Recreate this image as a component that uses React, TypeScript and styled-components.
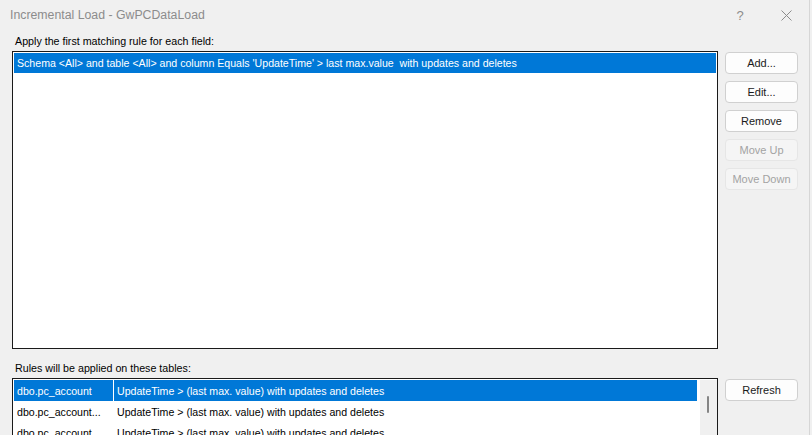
import styled, { createGlobalStyle } from 'styled-components';

const GlobalStyle = createGlobalStyle`
  html, body {
    margin: 0;
    padding: 0;
    background: #f0f0f0;
  }
  body {
    font-family: 'Liberation Sans', Arial, sans-serif;
  }
`;

// --- Window chrome ---
const Window = styled.div`
  width: 809px;
  height: 435px;
  background: #f0f0f0;
  border-right: 1px solid #d6d6d6;
  overflow: hidden;
  display: flex;
  flex-direction: column;
`;

const TitleBar = styled.div`
  height: 30px;
  display: flex;
  align-items: center;
  padding-left: 10px;
  color: #8c8c8c;
  font-family: 'Liberation Sans', Arial, sans-serif;
  font-size: 12.3px;
`;

const Title = styled.div`
  flex: 1;
`;

const TitleButton = styled.div`
  width: 46px;
  height: 30px;
  display: flex;
  align-items: center;
  justify-content: center;
  color: #8c8c8c;
  font-size: 13px;
`;

const Body = styled.div`
  flex: 1;
  padding: 0 0 0 12px;
  display: flex;
  flex-direction: column;
`;

const Label = styled.div<{ $height: number }>`
  height: ${(p) => p.$height}px;
  display: flex;
  align-items: flex-end;
  padding-left: 3px;
  padding-bottom: 4px;
  box-sizing: border-box;
  font-size: 10.7px;
  color: #000;
`;

const Section = styled.div`
  display: flex;
  gap: 7px;
  align-items: flex-start;
`;

// --- Lists ---
const ListBox = styled.div<{ $height: number }>`
  width: 706px;
  height: ${(p) => p.$height}px;
  box-sizing: border-box;
  border: 1px solid #1a1a1a;
  background: #fff;
  padding: 1px;
  position: relative;
  overflow: hidden;
`;

const RuleRow = styled.div<{ $selected?: boolean }>`
  height: 20px;
  display: flex;
  align-items: center;
  padding-left: 3px;
  font-size: 10.6px;
  white-space: pre;
  background: ${(p) => (p.$selected ? '#0078d7' : 'transparent')};
  color: ${(p) => (p.$selected ? '#fff' : '#000')};
`;

const TableRows = styled.div`
  margin-right: 18px;
`;

const TableRow = styled.div<{ $selected?: boolean }>`
  height: 21px;
  display: flex;
  font-size: 10.6px;
  background: ${(p) => (p.$selected ? '#0078d7' : 'transparent')};
  color: ${(p) => (p.$selected ? '#fff' : '#000')};
`;

const Cell = styled.div<{ $width?: number }>`
  ${(p) => (p.$width ? `width: ${p.$width}px;` : 'flex: 1;')}
  padding-left: 3px;
  display: flex;
  align-items: center;
  white-space: nowrap;
  overflow: hidden;
  border-right: 1px solid #fff;
`;

const ScrollTrack = styled.div`
  position: absolute;
  top: 1px;
  right: 0;
  bottom: 0;
  width: 17px;
  background: #f0f0f0;
`;

const ScrollThumb = styled.div`
  position: absolute;
  top: 16px;
  left: 7px;
  width: 2px;
  height: 17px;
  border-radius: 1px;
  background: #858585;
`;

// --- Buttons ---
const ButtonColumn = styled.div<{ $top: number }>`
  display: flex;
  flex-direction: column;
  gap: 7px;
  padding-top: ${(p) => p.$top}px;
`;

const Button = styled.button<{ $disabled?: boolean }>`
  width: 73px;
  height: 22px;
  box-sizing: border-box;
  padding: 0;
  border-radius: 4px;
  border: 1px solid ${(p) => (p.$disabled ? '#e6e6e6' : '#d0d0d0')};
  background: ${(p) => (p.$disabled ? '#f5f5f5' : '#fdfdfd')};
  color: ${(p) => (p.$disabled ? '#a3a3a3' : '#1a1a1a')};
  font-family: 'Liberation Sans', Arial, sans-serif;
  font-size: 11px;
`;

const rules = [
  "Schema <All> and table <All> and column Equals 'UpdateTime' > last max.value  with updates and deletes",
];

const tables = [
  { name: 'dbo.pc_account', rule: 'UpdateTime > (last max. value) with updates and deletes' },
  { name: 'dbo.pc_account...', rule: 'UpdateTime > (last max. value) with updates and deletes' },
  { name: 'dbo.pc_account...', rule: 'UpdateTime > (last max. value) with updates and deletes' },
];

export default function App() {
  return (
    <>
      <GlobalStyle />
      <Window>
        <TitleBar>
          <Title>Incremental Load - GwPCDataLoad</Title>
          <TitleButton>?</TitleButton>
          <TitleButton>
            <svg width="11" height="11" viewBox="0 0 11 11">
              <path d="M0.5 0.5 L10.5 10.5 M10.5 0.5 L0.5 10.5" stroke="#8c8c8c" strokeWidth="1" />
            </svg>
          </TitleButton>
        </TitleBar>
        <Body>
          <Label $height={21}>Apply the first matching rule for each field:</Label>
          <Section>
            <ListBox $height={298}>
              {rules.map((r, i) => (
                <RuleRow key={i} $selected={i === 0}>
                  {r}
                </RuleRow>
              ))}
            </ListBox>
            <ButtonColumn $top={1}>
              <Button>Add...</Button>
              <Button>Edit...</Button>
              <Button>Remove</Button>
              <Button $disabled>Move Up</Button>
              <Button $disabled>Move Down</Button>
            </ButtonColumn>
          </Section>
          <Label $height={29}>Rules will be applied on these tables:</Label>
          <Section>
            <ListBox $height={80}>
              <TableRows>
                {tables.map((t, i) => (
                  <TableRow key={i} $selected={i === 0}>
                    <Cell $width={96}>{t.name}</Cell>
                    <Cell>{t.rule}</Cell>
                  </TableRow>
                ))}
              </TableRows>
              <ScrollTrack>
                <ScrollThumb />
              </ScrollTrack>
            </ListBox>
            <ButtonColumn $top={1}>
              <Button>Refresh</Button>
            </ButtonColumn>
          </Section>
        </Body>
      </Window>
    </>
  );
}
